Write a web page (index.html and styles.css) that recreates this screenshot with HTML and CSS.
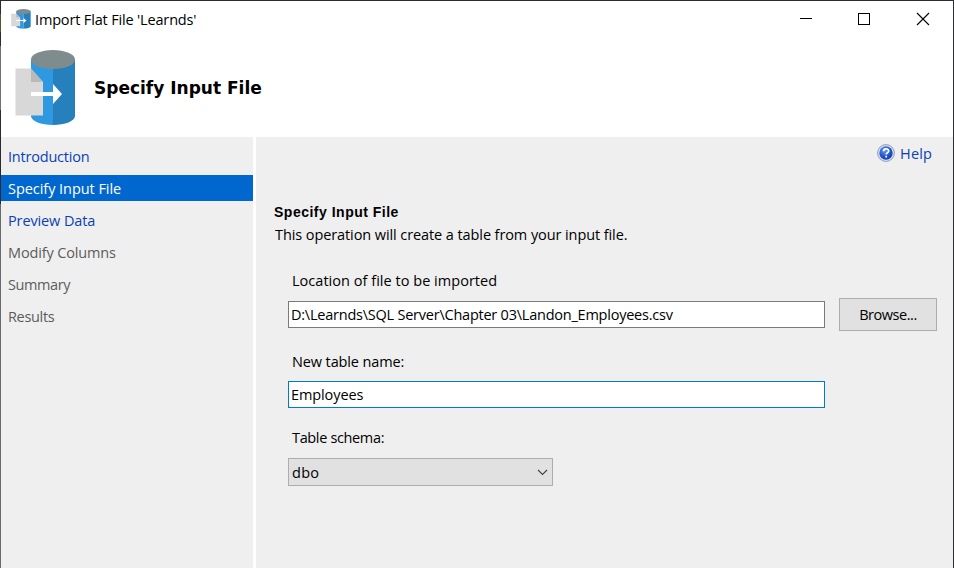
FILE: index.html
```html
<!DOCTYPE html>
<html lang="en">
<head>
<meta charset="utf-8">
<title>Import Flat File</title>
<link rel="stylesheet" href="styles.css">
</head>
<body>
<div class="window">
  <header class="titlebar">
    <svg class="app-icon" viewBox="15 50 61 76" preserveAspectRatio="none"><use href="#db-import"/></svg>
    <span class="title"><span class="t-title">Import Flat File 'Learnds'</span></span>
    <svg class="controls" width="144" height="36" viewBox="0 0 144 36" shape-rendering="crispEdges" fill="none" stroke="#000">
      <path d="M10 17.5h12"/>
      <path d="M68.500 12.500h11v11h-11z"/>
      <path d="M127 12l12 12M139 12l-12 12" shape-rendering="auto" stroke-width="1.100"/>
    </svg>
  </header>
  <div class="banner">
    <svg class="banner-icon" viewBox="15 50 61 76">
      <g id="db-import">
        <path d="M31 59v57c0 5 10 9 22 9V59z" fill="#2e98e0"/>
        <path d="M53 59v66c12 0 22-4 22-9V59z" fill="#2680bc"/>
        <ellipse cx="53" cy="59.500" rx="22" ry="9.500" fill="#7f8c8d"/>
        <path d="M15.500 68.500H31L43 82v33.500H15.500z" fill="#d8d8d8"/>
        <path d="M31 68.500L43 82H31z" fill="#b9b9b9"/>
        <path d="M31 92h22v-8l9 10-9 10v-8H31z" fill="#fff"/>
      </g>
    </svg>
    <h1 class="t-heading">Specify Input File</h1>
  </div>
  <div class="body">
    <nav class="steps">
      <a class="step"><span class="t-intro">Introduction</span></a>
      <a class="step active"><span class="t-spec">Specify Input File</span></a>
      <a class="step"><span class="t-preview">Preview Data</span></a>
      <a class="step disabled"><span class="t-modify">Modify Columns</span></a>
      <a class="step disabled"><span class="t-summary">Summary</span></a>
      <a class="step disabled"><span class="t-results">Results</span></a>
    </nav>
    <main class="page">
      <a class="help">
        <svg width="18" height="18" viewBox="0 0 18 18">
          <defs><radialGradient id="ball" cx=".4" cy=".3" r=".7"><stop offset="0" stop-color="#6c9bf0"/><stop offset=".6" stop-color="#2459cf"/><stop offset="1" stop-color="#123fae"/></radialGradient></defs>
          <circle cx="9" cy="9" r="8.400" fill="#dce3f0" stroke="#8d9cbd" stroke-width="1"/>
          <circle cx="9" cy="9" r="6.700" fill="url(#ball)"/>
          <path d="M6.500 7.300c0-3.400 5.200-3.200 5.200-.3 0 1.800-2.500 1.700-2.500 3.600M9.200 11.700v1.700" fill="none" stroke="#fff" stroke-width="1.700"/>
        </svg>
        <span class="t-help">Help</span>
      </a>
      <h2 class="t-sub">Specify Input File</h2>
      <p class="intro"><span class="t-desc">This operation will create a table from your input file.</span></p>
      <div class="form">
        <div class="label first"><span class="t-loc">Location of file to be imported</span></div>
        <div class="row">
          <div class="field"><span class="t-path">D:\Learnds\SQL Server\Chapter 03\Landon_Employees.csv</span></div>
          <button class="browse"><span class="t-browse">Browse...</span></button>
        </div>
        <div class="label second"><span class="t-new">New table name:</span></div>
        <div class="field focused"><span class="t-emp">Employees</span></div>
        <div class="label third"><span class="t-schema">Table schema:</span></div>
        <div class="select"><span class="t-dbo">dbo</span>
          <svg width="11" height="7" viewBox="0 0 11 7"><path d="M1 1l4.500 4.500L10 1" fill="none" stroke="#444" stroke-width="1.200"/></svg>
        </div>
      </div>
    </main>
  </div>
</div>
</body>
</html>
```
FILE: styles.css
```css
* { box-sizing: border-box; }
body {
  margin: 0;
  padding: 1px 1px 0;
  width: 954px;
  height: 568px;
  overflow: hidden;
  background: linear-gradient(#2c2a2e 0 14px, #61512b 14px 32px, #2c2a2e 32px 46px, #707070 46px 110px, #2c2a2e 110px 204px, #696969 204px) left / 1px 100% no-repeat, #2c2c34;
  font: 14.5px/20px "Open Sans", "Noto Sans", sans-serif;
  color: #000;
}
.window { width: 952px; height: 567px; background: #fff; display: flex; flex-direction: column; }
.titlebar { height: 36px; display: flex; flex: none; }
.app-icon { width: 20px; height: 20px; margin: 8px 0 0 10px; flex: none; }
.title { margin: 9px 0 0 4px; flex: 1; }
.controls { flex: none; margin-right: 19px; }
.banner { height: 100px; flex: none; display: flex; }
.banner-icon { width: 61px; height: 76px; margin: 13px 0 0 14px; flex: none; }
h1 { margin: 39px 0 0 18px; font: bold 17px/24px "DejaVu Sans", Verdana, sans-serif; white-space: nowrap; }
.body { flex: 1; display: flex; }
.steps { width: 255px; border-right: 3px solid #fff; background: #efefef; padding-top: 6px; flex: none; }
.step { display: block; height: 26px; margin-bottom: 6px; padding: 4px 0 0 7px; color: #0a3fb5; }
.active { background: #0067ce; color: #fff; }
.disabled { color: #5c5c5c; }
.page { flex: 1; background: #efefef; padding-left: 19px; }
.help { display: flex; height: 32px; padding: 7px 0 0 602px; gap: 5px; color: #0a3fb5; }
h2 { margin: 34px 0 0 -1px; font: bold 14px/18px "Liberation Sans", Arial, sans-serif; }
.intro { margin: 4px 0 0; }
.form { padding-left: 13px; }
.label { height: 20px; padding-left: 4px; }
.first { margin-top: 26px; }
.row { display: flex; align-items: center; height: 33px; margin-top: 7px; gap: 14px; }
.field { width: 537px; height: 27px; border: 1px solid #7a7a7a; background: #fff; padding: 3px 0 0 2px; }
.focused { border-color: #0078d7; margin-top: 9px; }
.browse { width: 98px; height: 33px; border: 1px solid #adadad; background: #e1e1e1; font: inherit; color: #000; padding: 0; }
.second { margin-top: 21px; }
.third { margin-top: 20px; }
.select { width: 265px; height: 28px; margin-top: 10px; padding: 4px 4px 0 3px; border: 1px solid #adadad; background: #e1e1e1; display: flex; justify-content: space-between; }
.select svg { margin-top: 6px; }
span { white-space: nowrap; }

/* per-string tracking */
.t-title { letter-spacing: -0.16px; }
.t-intro { letter-spacing: -0.2px; }
.t-spec { letter-spacing: -0.05px; }
.t-preview { letter-spacing: -0.12px; }
.t-modify { letter-spacing: -0.14px; }
.t-summary { letter-spacing: -0.4px; }
.t-results { letter-spacing: -0.33px; }
.t-desc { letter-spacing: -0.09px; }
.t-loc { letter-spacing: 0.03px; }
.t-path { letter-spacing: -0.23px; }
.t-new { letter-spacing: -0.12px; }
.t-emp { letter-spacing: -0.1px; }
.t-schema { letter-spacing: -0.35px; }
.t-dbo { letter-spacing: 0.3px; }
.t-browse { letter-spacing: -0.45px; }
.t-help { letter-spacing: 0.2px; }
.t-sub { letter-spacing: 0.5px; }
```
